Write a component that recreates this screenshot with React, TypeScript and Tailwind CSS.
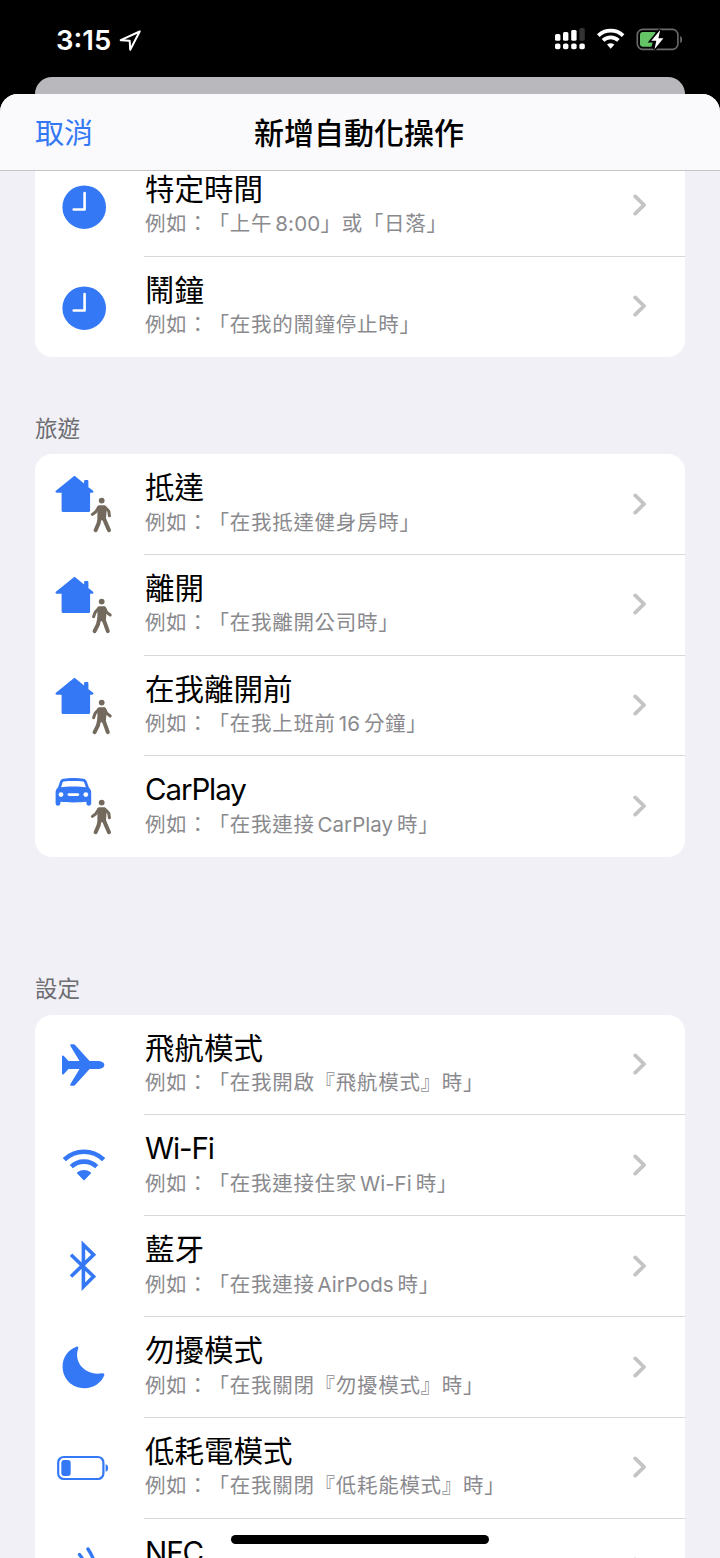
import type { ReactNode } from 'react'

const BLUE = '#3478f6'

// Icon cells share one 109x101 canvas: the space left of the row text.
const Cell = ({ children }: { children: ReactNode }) => (
  <svg width="109" height="101" viewBox="0 0 109 101" className="shrink-0" fill={BLUE}>
    {children}
  </svg>
)

const ClockIcon = () => (
  <Cell>
    <circle cx="49.2" cy="51.2" r="21.8" />
    <path
      d="M49.6 37v16.5H38.7"
      fill="none"
      stroke="#fff"
      strokeWidth="2.6"
      strokeLinecap="round"
      strokeLinejoin="round"
    />
  </Cell>
)

const Walker = ({ away }: { away?: boolean }) => (
  <g fill="#736a5d" stroke="#736a5d" strokeLinecap="round" strokeLinejoin="round">
    <circle cx="66.7" cy="46.6" r="2.9" stroke="none" />
    <path d="M64.2 53h4.8l1 1.6-.8 9-2.2 1-2.8-1z" strokeWidth="3.6" />
    <path
      d={away ? 'M63.6 53.4l-3.6 4.2-1.4 4.2M69.4 53l2.4 4.4 3.4 2.6' : 'M63.6 53.4l-3 4.6-3.2 2.4M69.8 53l4 4.2.6 4.6'}
      fill="none"
      strokeWidth="3"
    />
    <path
      d={away ? 'M64.4 63l-1.4 6.4-3.4 6.8M68 63l2.4 6.4 2.4 6.8' : 'M64.8 63l-1.2 6.4-3 6.8M68.4 63l2.6 6.4 3 6.8'}
      fill="none"
      strokeWidth="4"
    />
  </g>
)

const House = () => (
  <path
    d="M39.5 23L21.6 37.6H27.7V56.8H54V37.6H57.4L52.3 33.6V27.2H50.2V31.8Z"
    stroke={BLUE}
    strokeWidth="2.2"
    strokeLinejoin="round"
  />
)

const ArriveIcon = () => (
  <Cell>
    <House />
    <Walker />
  </Cell>
)

const LeaveIcon = () => (
  <Cell>
    <House />
    <Walker away />
  </Cell>
)

const CarIcon = () => (
  <Cell>
    <path
      fillRule="evenodd"
      d="M28.4 22.7c5-.9 15-.9 20 0 1.8.3 2.8 1.2 3.4 2.8l2 6c1.6 1.3 2.4 2.9 2.4 5v10.8c0 1.6-.9 2.5-2.4 2.5s-2.4-.9-2.4-2.5v-1.5c-7 .8-19 .8-26 0v1.5c0 1.6-.9 2.5-2.4 2.5s-2.4-.9-2.4-2.5V36.5c0-2.1.8-3.7 2.4-5l2-6c.6-1.6 1.6-2.5 3.4-2.8zM27.5 26.7l-1.5 4.6c5-1 19.8-1 24.8 0l-1.5-4.6c-.3-.9-.8-1.2-1.7-1.3-4-.6-14.4-.6-18.4 0-.9.1-1.4.4-1.7 1.3z"
    />
    <circle cx="26" cy="38.6" r="2.4" fill="#fff" />
    <circle cx="50.8" cy="38.6" r="2.4" fill="#fff" />
    <rect x="32.6" y="37.2" width="11.6" height="2.8" rx="1.4" fill="#fff" />
    <Walker />
  </Cell>
)

const PlaneIcon = () => (
  <Cell>
    <path d="M27 41.2q.1-.8.9-.7.6.1 1 .6L33.5 46h11L35.3 30.8q-.6-1.5.9-1.6h2.2q1.1.1 1.7.9L54.6 46h9.2c3.3.2 5.6 1.7 5.6 4s-2.3 3.8-5.6 4h-9.2L40.1 69.9q-.6.8-1.7.9h-2.2q-1.5-.1-.9-1.6L44.5 54h-11l-4.6 4.9q-.4.5-1 .6-.8.1-.9-.7z" />
  </Cell>
)

const WifiIcon = () => (
  <Cell>
    <g fill="none" stroke={BLUE} strokeWidth="4.6">
      <path d="M29.3 44.7a28.5 28.5 0 0 1 39.4 0" />
      <path d="M36.3 51.7a18.3 18.3 0 0 1 25.4 0" />
    </g>
    <path d="M42.2 57.3q6.800-4.600 13.600 0 .6.500 0 1.100L49.600 65q-.6.600-1.200 0L42.200 58.400q-.6-.6 0-1.100z" />
  </Cell>
)

const BluetoothIcon = () => (
  <Cell>
    <path
      d="M36 38.7L58.6 60.5 48.4 70.7V28.7L58.6 38.7 36 60.5"
      fill="none"
      stroke={BLUE}
      strokeWidth="3.6"
    />
  </Cell>
)

const MoonIcon = () => (
  <Cell>
    <path d="M41.2 29.7c1.4-.6 2.6.3 2 1.9-4.8 13.5 6.4 27.4 23.9 24.7 1.8-.3 2.8.8 2.1 2.3C66 66.3 58.5 71.2 49.5 71.2 37 71.2 27.6 61.9 27.6 49.5c0-9 5.2-16.6 13.6-19.8z" />
  </Cell>
)

const LowBatteryIcon = () => (
  <Cell>
    <rect x="23.2" y="39" width="45.2" height="22" rx="5.5" fill="none" stroke={BLUE} strokeWidth="2.2" />
    <rect x="26.3" y="42.1" width="9.4" height="15.8" rx="3" />
    <path d="M70.6 46c3.4 1.2 3.4 6.8 0 8z" />
  </Cell>
)

const NfcIcon = () => (
  <Cell>
    <g fill="none" stroke={BLUE} strokeWidth="3.4" strokeLinecap="round">
      <path d="M36 41q8 12 6 26" />
      <path d="M44.5 35.5q9 11 9.500 32" />
      <path d="M53 30q10 15 10 36" />
    </g>
  </Cell>
)

type RowType = { icon: ReactNode; title: ReactNode; desc?: ReactNode }

const LatinTitle = ({ children }: { children: ReactNode }) => (
  <span className="tracking-[-1.1px]">{children}</span>
)

const Latin = ({ children }: { children: ReactNode }) => (
  <span className="mr-[4px] ml-[3px] tracking-normal">{children}</span>
)

const times: RowType[] = [
  {
    icon: <ClockIcon />,
    title: '特定時間',
    desc: (
      <>
        例如：「上午<span className="ml-[3px] tracking-[0.2px]">8:00</span>」或「日落」
      </>
    ),
  },
  { icon: <ClockIcon />, title: '鬧鐘', desc: '例如：「在我的鬧鐘停止時」' },
]

const travel: RowType[] = [
  { icon: <ArriveIcon />, title: '抵達', desc: '例如：「在我抵達健身房時」' },
  { icon: <LeaveIcon />, title: '離開', desc: '例如：「在我離開公司時」' },
  {
    icon: <LeaveIcon />,
    title: '在我離開前',
    desc: (
      <>
        例如：「在我上班前<Latin>16</Latin>分鐘」
      </>
    ),
  },
  {
    icon: <CarIcon />,
    title: <LatinTitle>CarPlay</LatinTitle>,
    desc: (
      <>
        例如：「在我連接<Latin>CarPlay</Latin>時」
      </>
    ),
  },
]

const settings: RowType[] = [
  { icon: <PlaneIcon />, title: '飛航模式', desc: '例如：「在我開啟『飛航模式』時」' },
  {
    icon: <WifiIcon />,
    title: <LatinTitle>Wi-Fi</LatinTitle>,
    desc: (
      <>
        例如：「在我連接住家<Latin>Wi-Fi</Latin>時」
      </>
    ),
  },
  {
    icon: <BluetoothIcon />,
    title: '藍牙',
    desc: (
      <>
        例如：「在我連接<Latin>AirPods</Latin>時」
      </>
    ),
  },
  { icon: <MoonIcon />, title: '勿擾模式', desc: '例如：「在我關閉『勿擾模式』時」' },
  { icon: <LowBatteryIcon />, title: '低耗電模式', desc: '例如：「在我關閉『低耗能模式』時」' },
  { icon: <NfcIcon />, title: <LatinTitle>NFC</LatinTitle> },
]

const Row = ({ icon, title, desc, last }: RowType & { last: boolean }) => (
  <li className="flex h-[100.8px]">
    {icon}
    <div className={`flex min-w-0 flex-1 justify-between ${last ? '' : 'border-b border-[#d8d8db]'}`}>
      <div className="pt-[13px] pl-px whitespace-nowrap">
        <p className="h-[40.5px] text-[29.5px] leading-[41px] text-black">{title}</p>
        {desc && (
          <p className="h-[30px] text-[20.5px] leading-[30px] tracking-[0.7px] text-[#8a8a8e]">{desc}</p>
        )}
      </div>
      <svg width="14" height="22" viewBox="0 0 14 22" className="mt-[38.5px] mr-[38px]" fill="none">
        <path
          d="M2.2 2.4l8.800 8.600-8.800 8.600"
          stroke="#c4c4c6"
          strokeWidth="3.8"
          strokeLinecap="round"
          strokeLinejoin="round"
        />
      </svg>
    </div>
  </li>
)

const Group = ({ rows }: { rows: RowType[] }) => (
  <ul className="mx-[35px] overflow-hidden rounded-[17px] bg-white">
    {rows.map((row, i) => (
      <Row key={i} {...row} last={i === rows.length - 1} />
    ))}
  </ul>
)

const StatusBar = () => (
  <div className="flex h-[77px] items-start justify-between pt-[24px] pr-[37px] pl-[56px] text-white">
    <div className="flex items-center gap-[8px]">
      <span className="text-[27.5px] leading-[33px] font-semibold">3:15</span>
      <svg width="22" height="22" viewBox="0 0 22 22" fill="none">
        <path d="M20.7 1.5L1.7 10.200l9 .6.500 9z" stroke="#fff" strokeWidth="2" strokeLinejoin="round" />
      </svg>
    </div>
    <svg width="130" height="32" viewBox="0 0 130 32" fill="#fff">
      <rect x="2" y="10" width="5.4" height="6.8" rx="1.5" />
      <rect x="10" y="8" width="5.4" height="8.8" rx="1.5" />
      <rect x="18.2" y="6" width="5.4" height="10.8" rx="1.5" />
      <rect x="26.4" y="4" width="5.4" height="12.8" rx="1.5" fill="#333" />
      <rect x="2" y="19.4" width="5.4" height="5.8" rx="1.8" />
      <rect x="10" y="19.4" width="5.4" height="5.8" rx="1.8" />
      <rect x="18.2" y="19.4" width="5.4" height="5.8" rx="1.8" />
      <rect x="26.4" y="19.4" width="5.4" height="5.8" rx="1.8" />
      <g fill="none" stroke="#fff" strokeWidth="3.8">
        <path d="M45.3 11.600a18 18 0 0 1 24.800 0" />
        <path d="M50 16.400a11.300 11.300 0 0 1 15.400 0" />
      </g>
      <path d="M54 20.600q3.700-2.800 7.400 0l-3.700 4.200z" />
      <rect x="84.3" y="5.4" width="40.6" height="20" rx="5.5" fill="none" stroke="#6b6b6b" strokeWidth="1.6" />
      <path d="M127.2 12c2.600 1 2.600 6 0 7z" fill="#6b6b6b" />
      <path d="M90 8.100h12.500l-4 14.600H90q-3 0-3-3v-8.600q0-3 3-3z" fill="#65c466" />
      <path
        d="M107.2 6L98.3 16.700h5L101.5 25.300l8.900-11h-5z"
        stroke="#000"
        strokeWidth="3.4"
        paintOrder="stroke"
      />
    </svg>
  </div>
)

const App = () => {
  return (
    <div
      lang="zh-TW"
      className="relative flex h-[1558px] w-[720px] flex-col overflow-hidden bg-black font-['Inter','Noto_Sans_CJK_TC',sans-serif] [text-spacing-trim:space-all]"
    >
      <StatusBar />
      <div className="mx-[35px] h-[17px] shrink-0 rounded-t-[17px] bg-[#b8b8bd]" />
      <main className="flex min-h-0 flex-1 flex-col overflow-hidden rounded-t-[18px] bg-[#f1f0f6]">
        <header className="grid h-[77px] shrink-0 grid-cols-[1fr_auto_1fr] items-center border-b border-[#c6c6c9] bg-[#fafafc] pt-[2px] pr-[37px] pl-[35px] text-[29px]">
          <button className="justify-self-start pt-px text-[#3478f6]">取消</button>
          <h1 className="text-[30px] font-medium text-black">新增自動化操作</h1>
        </header>
        <div className="flex min-h-0 flex-1 flex-col overflow-hidden">
          {/* list is scrolled, the first row is partly under the header */}
          <div className="-mt-[15.2px] flex flex-col">
            <Group rows={times} />
            <h2 className="h-[96.6px] pt-[56px] pl-[35px] text-[22.5px] leading-[32px] text-[#6d6d72]">旅遊</h2>
            <Group rows={travel} />
            <h2 className="h-[157.5px] pt-[116px] pl-[35px] text-[22.5px] leading-[32px] text-[#6d6d72]">設定</h2>
            <Group rows={settings} />
          </div>
        </div>
      </main>
      <div className="absolute bottom-[14px] left-[231px] h-[9px] w-[258px] rounded-full bg-black" />
    </div>
  )
}

export default App
